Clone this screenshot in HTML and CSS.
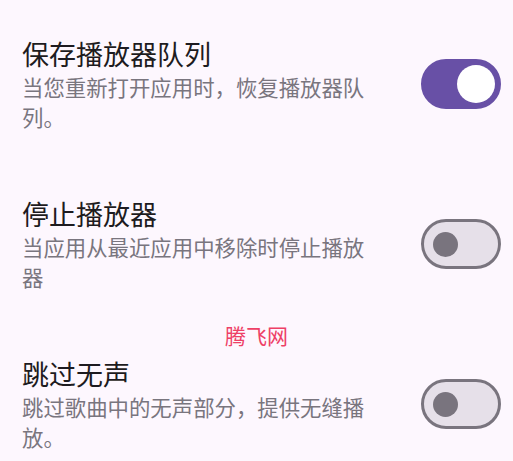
FILE: index.html
```html
<!DOCTYPE html>
<html lang="zh-CN">
<head>
    <meta charset="UTF-8">
    <meta name="viewport" content="width=device-width, initial-scale=1.0">
    <title>播放器设置</title>
    <link rel="stylesheet" href="styles.css">
</head>
<body>

<div class="settings">
    <div class="item">
        <div class="text">
            <div class="title">保存播放器队列</div>
            <div class="summary">当您重新打开应用时，恢复播放器队列。</div>
        </div>
        <div class="switch on"><span class="thumb"></span></div>
    </div>

    <div class="item">
        <div class="text">
            <div class="title">停止播放器</div>
            <div class="summary">当应用从最近应用中移除时停止播放器</div>
        </div>
        <div class="switch"><span class="thumb"></span></div>
    </div>

    <div class="item">
        <div class="text">
            <div class="title">跳过无声</div>
            <div class="summary">跳过歌曲中的无声部分，提供无缝播放。</div>
        </div>
        <div class="switch"><span class="thumb"></span></div>
    </div>

    <div class="watermark">腾飞网</div>
</div>

</body>
</html>
```

FILE: styles.css
```css
body {
    margin: 0;
    padding: 0;
    background-color: #fdf7fe;
    font-family: "Noto Sans CJK SC", "Noto Sans", sans-serif;
}
.settings {
    position: relative;
    padding-top: 4px;
}
.item {
    display: flex;
    align-items: center;
    gap: 50px;
    height: 160px;
    padding: 0 12px 0 22px;
    box-sizing: border-box;
}
.text {
    width: 349px;
}
.title {
    font-size: 27px;
    line-height: 36px;
    color: #1d1b20;
}
.summary {
    font-size: 21.4px;
    line-height: 30px;
    color: #79757e;
}
.switch {
    width: 80px;
    height: 50px;
    box-sizing: border-box;
    border-radius: 25px;
    border: 3px solid #79747e;
    background-color: #e6e0e9;
    display: flex;
    align-items: center;
    padding-left: 9px;
    flex-shrink: 0;
}
.switch .thumb {
    width: 25px;
    height: 25px;
    border-radius: 50%;
    background-color: #79747e;
}
.switch.on {
    border-color: #6850a6;
    background-color: #6850a6;
    justify-content: flex-end;
    padding-left: 0;
    padding-right: 3px;
}
.switch.on .thumb {
    width: 38px;
    height: 38px;
    background-color: #fff;
}
/* overlay stamp from the screenshot */
.watermark {
    position: absolute;
    left: 225px;
    top: 320px;
    font-size: 21px;
    line-height: 30px;
    color: #ee4066;
}
```
